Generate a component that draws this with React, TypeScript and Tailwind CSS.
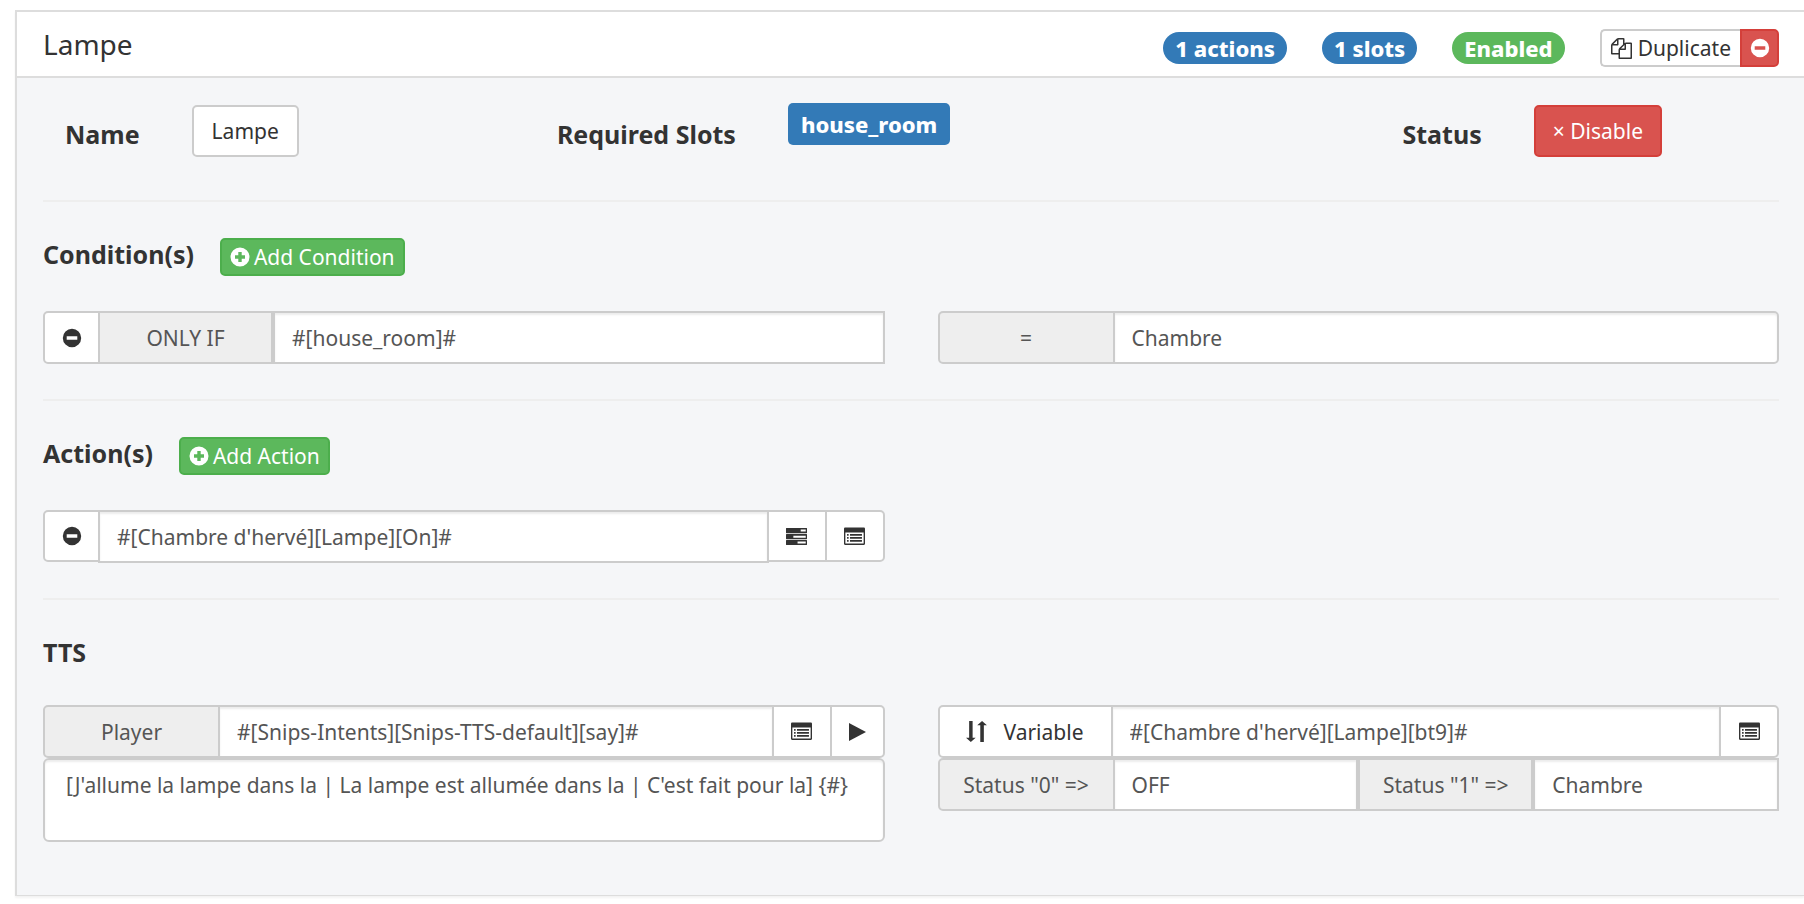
import * as React from "react"
import clsx from "clsx"

// ── Icons ──
function IconFrame({ children, className = "size-5" }: { children: React.ReactNode; className?: string }) {
    return (
        <svg viewBox="0 0 20 20" fill="currentColor" aria-hidden="true" className={clsx("shrink-0", className)}>
            {children}
        </svg>
    )
}

function MinusIcon() {
    return (
        <IconFrame>
            <path fillRule="evenodd" d="M10 .8a9.2 9.2 0 1 1 0 18.4A9.2 9.2 0 0 1 10 .8ZM4.700 8.200v3.600h10.600V8.200Z" />
        </IconFrame>
    )
}

function PlusIcon() {
    return (
        <IconFrame>
            <path fillRule="evenodd" d="M10 .5a9.5 9.5 0 1 1 0 19 9.5 9.5 0 0 1 0-19ZM8.3 5v3.3H5v3.4h3.3V15h3.4v-3.3H15V8.3h-3.3V5Z" />
        </IconFrame>
    )
}

function CopyIcon() {
    return (
        <svg viewBox="0 0 1792 1792" fill="currentColor" aria-hidden="true" className="size-[21px] shrink-0">
            <path d="M1696 384q40 0 68 28t28 68v1216q0 40-28 68t-68 28h-960q-40 0-68-28t-28-68v-288h-544q-40 0-68-28t-28-68v-672q0-40 20-88t48-76l408-408q28-28 76-48t88-20h416q40 0 68 28t28 68v328q68-40 128-40h416zm-544 213l-299 299h299v-299zm-640-384l-299 299h299v-299zm196 647l316-316v-416h-384v416q0 40-28 68t-68 28h-416v640h512v-256q0-40 20-88t48-76zm956 804v-1152h-384v416q0 40-28 68t-68 28h-416v640h896z" />
        </svg>
    )
}

function TasksIcon() {
    return (
        <IconFrame className="size-[21px]">
            <path fillRule="evenodd" d="M.4 1.8h19.2l.4.4v4.4l-.4.4H.4L0 6.600V2.200ZM14 3.400v1.900h4.800V3.400Z" />
            <path fillRule="evenodd" d="M.4 7.700h19.200l.4.4v4.100l-.4.4H.4l-.4-.4V8.100ZM7 9.200v1.900h11.800V9.200Z" />
            <path fillRule="evenodd" d="M.4 13.300h19.200l.4.4v4.100l-.4.4H.4l-.4-.4v-4.100ZM11 14.800v1.900h7.800v-1.900Z" />
        </IconFrame>
    )
}

function ListIcon() {
    return (
        <IconFrame className="size-[21px]">
            <path fillRule="evenodd" d="M1 1.500h18a1 1 0 0 1 1 1v14.500a1 1 0 0 1-1 1H1a1 1 0 0 1-1-1V2.500a1 1 0 0 1 1-1ZM1.300 6.300v10.400h17.400V6.300Z" />
            <path d="M2.900 7.600h1.500v1.600H2.900ZM2.900 10.500h1.500v1.600H2.900ZM2.900 13.400h1.500v1.600H2.900ZM5.700 7.600h11.400v1.600H5.700ZM5.700 10.500h11.400v1.600H5.700ZM5.700 13.400h11.400v1.600H5.700Z" />
        </IconFrame>
    )
}

function PlayIcon() {
    return (
        <IconFrame>
            <path d="M2 1 19 10 2 19Z" />
        </IconFrame>
    )
}

function SortIcon() {
    return (
        <IconFrame className="size-[21px]">
            <path d="M3 0h3.300v16h2.900l-4.600 4L0 16h3ZM13.600 20V4h-2.900l4.600-4 4.600 4h-2.900v16Z" />
        </IconFrame>
    )
}

// ── Form parts ──
function Badge({ children, green }: { children: React.ReactNode; green?: boolean }) {
    return (
        <span className={clsx("rounded-[16px] px-3 text-[22px] leading-8 font-extrabold text-white", green ? "bg-[#5cb85c]" : "bg-[#337ab7]")}>
            {children}
        </span>
    )
}

function Addon({ className = "w-[177px]", ...props }: React.ComponentProps<"label">) {
    return (
        <label
            className={clsx("flex shrink-0 items-center justify-center border-2 border-[#ccc] bg-[#eee] text-[#555] first:rounded-l-[5px]", className)}
            {...props}
        />
    )
}

function IconButton({ children, label, className = "w-[60px]" }: { children: React.ReactNode; label: string; className?: string }) {
    return (
        <button type="button" aria-label={label} className={clsx("flex shrink-0 items-center justify-center border-2 border-[#ccc] bg-white text-[#333] first:rounded-l-[5px] last:rounded-r-[5px]", className)}>
            {children}
        </button>
    )
}

function TextInput({ className, ...props }: React.ComponentProps<"input">) {
    return (
        <input
            type="text"
            className={clsx("min-w-0 flex-1 border-2 border-[#ccc] bg-white px-[17px] text-[#555] shadow-[inset_0_2px_2px_rgba(0,0,0,0.075)] outline-none", className)}
            {...props}
        />
    )
}

function InputGroup({ children }: { children: React.ReactNode }) {
    return <div className="flex h-[53px] -space-x-[2px]">{children}</div>
}

function Section({ title, action, children }: { title: string; action?: string; children: React.ReactNode }) {
    return (
        <section className="border-t-2 border-[#eee] pt-9 pb-[35px]">
            <div className="mb-[35px] flex items-start gap-[26px]">
                <h2 className="h-[34px] text-[25px] leading-8 font-bold">{title}</h2>
                {action && (
                    <button type="button" className="flex h-[38px] items-center gap-1 rounded-[5px] border-2 border-[#4cae4c] bg-[#5cb85c] px-2 text-white">
                        <PlusIcon />
                        {action}
                    </button>
                )}
            </div>
            <div className="grid grid-cols-2 gap-x-[53px]">{children}</div>
        </section>
    )
}

export default function App() {
    return (
        <main className="bg-white pt-[10px] pb-2 pl-[15px] font-['Noto_Sans',sans-serif] text-[21px] leading-[30px] text-[#333]">
            <div className="border-2 border-r-0 border-b border-[#ddd] bg-[#f5f6f8] shadow-[0_2px_2px_rgba(0,0,0,0.05)]">
                {/* ── Panel heading ── */}
                <header className="flex h-[66px] items-center border-b-2 border-[#ddd] bg-white pr-[25px] pl-[26px]">
                    <h1 className="text-[28px] leading-9">Lampe</h1>
                    <div className="ml-auto flex items-center gap-[35px] pt-2">
                        <Badge>1 actions</Badge>
                        <Badge>1 slots</Badge>
                        <Badge green>Enabled</Badge>
                        <div className="flex h-[38px]">
                            <button type="button" className="flex items-center gap-[6px] rounded-l-[5px] border-2 border-r-0 border-[#ccc] bg-white px-[9px]">
                                <CopyIcon />
                                Duplicate
                            </button>
                            <button type="button" aria-label="Remove" className="flex w-[39px] items-center justify-center rounded-r-[5px] border-2 border-[#d43f3a] bg-[#d9534f] text-white">
                                <MinusIcon />
                            </button>
                        </div>
                    </div>
                </header>

                <div className="pr-[25px] pb-[18px] pl-[26px]">
                    {/* ── Binding summary ── */}
                    <div className="flex h-[122px] items-start pt-[25px] pl-[22px]">
                        <div className="flex w-[28.7%] gap-[52px]">
                            <span className="pt-[14px] text-[25px] leading-[34px] font-bold">Name</span>
                            <button type="button" className="mt-[2px] h-[52px] rounded-[5px] border-2 border-[#ccc] bg-white px-[18px]">Lampe</button>
                        </div>
                        <div className="flex gap-[52px]">
                            <span className="pt-[14px] text-[25px] leading-[34px] font-bold">Required Slots</span>
                            <span className="h-[42px] rounded-[5px] bg-[#337ab7] px-[13px] text-[22px] leading-[42px] font-extrabold text-white">house_room</span>
                        </div>
                        <div className="mr-[117px] ml-auto flex gap-[52px]">
                            <span className="pt-[14px] text-[25px] leading-[34px] font-bold">Status</span>
                            <button type="button" className="mt-[2px] h-[52px] rounded-[5px] border-2 border-[#d43f3a] bg-[#d9534f] px-[17px] text-white">× Disable</button>
                        </div>
                    </div>

                    <Section title="Condition(s)" action="Add Condition">
                        <InputGroup>
                            <IconButton label="Remove condition" className="w-[57px]"><MinusIcon /></IconButton>
                            <Addon htmlFor="cond-left" className="mr-0 w-[175px]">ONLY IF</Addon>
                            <TextInput id="cond-left" defaultValue="#[house_room]#" />
                        </InputGroup>
                        <InputGroup>
                            <Addon htmlFor="cond-right">=</Addon>
                            <TextInput id="cond-right" defaultValue="Chambre" className="rounded-r-[5px]" />
                        </InputGroup>
                    </Section>

                    <Section title="Action(s)" action="Add Action">
                        <InputGroup>
                            <IconButton label="Remove action" className="h-[52px] w-[57px]"><MinusIcon /></IconButton>
                            <TextInput aria-label="Action" defaultValue="#[Chambre d'hervé][Lampe][On]#" />
                            <IconButton label="Select scenario" className="h-[52px] w-[60px]"><TasksIcon /></IconButton>
                            <IconButton label="Select command" className="h-[52px] w-[60px]"><ListIcon /></IconButton>
                        </InputGroup>
                    </Section>

                    <Section title="TTS">
                        <div>
                            <InputGroup>
                                <Addon htmlFor="player">Player</Addon>
                                <TextInput id="player" defaultValue="#[Snips-Intents][Snips-TTS-default][say]#" />
                                <IconButton label="Select player"><ListIcon /></IconButton>
                                <IconButton label="Play" className="w-[55px]"><PlayIcon /></IconButton>
                            </InputGroup>
                            <textarea
                                aria-label="Message"
                                className="block h-[84px] w-full resize-none rounded-[6px] border-2 border-[#ccc] bg-white px-[21px] py-[10px] text-[#555] shadow-[inset_0_2px_2px_rgba(0,0,0,0.075)] outline-none"
                                defaultValue="[J'allume la lampe dans la | La lampe est allumée dans la | C'est fait pour la] {#}"
                            />
                        </div>
                        <div>
                            <InputGroup>
                                <button type="button" className="flex w-[175px] shrink-0 items-center justify-center gap-4 rounded-l-[5px] border-2 border-[#ccc] bg-white">
                                    <SortIcon />
                                    Variable
                                </button>
                                <TextInput aria-label="Variable" defaultValue="#[Chambre d'hervé][Lampe][bt9]#" />
                                <IconButton label="Select variable"><ListIcon /></IconButton>
                            </InputGroup>
                            <InputGroup>
                                <Addon htmlFor="status-0">Status "0" =&gt;</Addon>
                                <TextInput id="status-0" defaultValue="OFF" className="mr-0" />
                                <Addon htmlFor="status-1" className="mr-0 w-[175px]">Status "1" =&gt;</Addon>
                                <TextInput id="status-1" defaultValue="Chambre" />
                            </InputGroup>
                        </div>
                    </Section>
                </div>
            </div>
        </main>
    )
}
